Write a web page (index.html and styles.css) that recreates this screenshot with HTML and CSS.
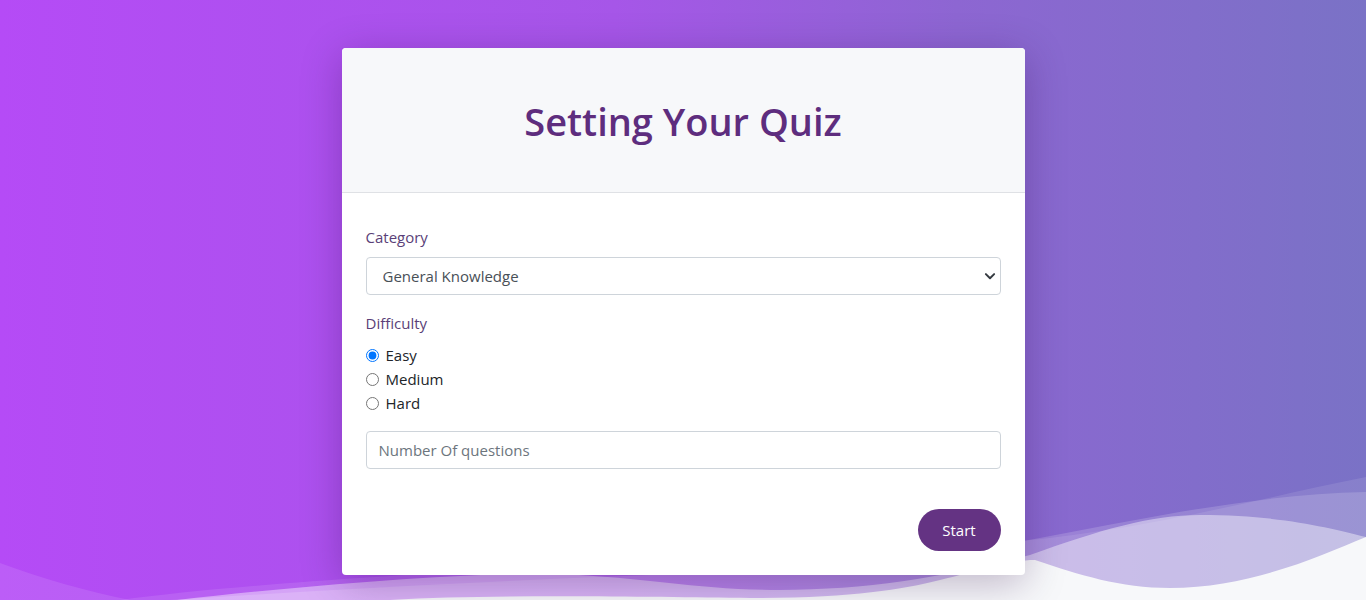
FILE: index.html
```html
<!DOCTYPE html>
<html lang="en">
<head>
<meta charset="utf-8">
<title>Setting Your Quiz</title>
<link rel="stylesheet" href="styles.css">
</head>
<body>
<svg class="waves" viewBox="0 0 1366 600" preserveAspectRatio="none" aria-hidden="true">
  <path class="w1" d="M0,563 C40,578 90,592 130,600 L0,600 Z"/>
  <path class="w2" d="M120,600 C300,575 700,560 1000,543 C1150,530 1250,500 1366,477 L1366,600 Z"/>
  <path class="w3" d="M170,600 C400,585 600,576 800,570 C1000,560 1180,496 1366,492 L1366,600 Z"/>
  <path class="w4" d="M177,600 C300,586 460,572 560,574 C650,578 700,590 780,590 C870,590 950,576 1030,555 C1100,530 1150,515 1200,515 C1280,515 1330,528 1366,537 L1366,600 Z"/>
  <path class="w5" d="M390,600 C500,594 650,597 750,598 C850,598 900,590 940,580 C990,568 1010,560 1035,560 C1080,575 1120,588 1170,588 C1250,588 1320,556 1366,537 L1366,600 Z"/>
</svg>
<main class="card">
  <header class="card-header">
    <h1 class="title">Setting Your Quiz</h1>
  </header>
  <form class="card-body">
    <div class="group">
      <label class="label" for="category">Category</label>
      <div class="select-wrap">
        <select id="category" class="control select">
          <option>General Knowledge</option>
        </select>
        <svg class="chevron" viewBox="0 0 16 16" aria-hidden="true"><path d="M2.5 5.5 L8 11 L13.5 5.5" fill="none" stroke="#343a40" stroke-width="2.6" stroke-linecap="round" stroke-linejoin="round"/></svg>
      </div>
    </div>
    <div class="group">
      <span class="label">Difficulty</span>
      <div class="radios">
        <label class="radio"><input type="radio" name="difficulty" checked><span>Easy</span></label>
        <label class="radio"><input type="radio" name="difficulty"><span>Medium</span></label>
        <label class="radio"><input type="radio" name="difficulty"><span>Hard</span></label>
      </div>
    </div>
    <div class="group">
      <input class="control input" type="text" placeholder="Number Of questions">
    </div>
    <div class="actions">
      <button type="button" class="btn">Start</button>
    </div>
  </form>
</main>
</body>
</html>
```
FILE: styles.css
```css
* { box-sizing: border-box; }
html, body { margin: 0; padding: 0; }
body {
  position: relative;
  height: 600px;
  overflow: hidden;
  font-family: "Open Sans", "Noto Sans", sans-serif;
  background: linear-gradient(90deg, #b54bf6 0%, #a656e8 45%, #8d66d2 70%, #7a72c6 100%);
  display: flex;
  flex-direction: column;
  align-items: center;
}
.waves {
  position: absolute;
  left: 0; top: 0;
  width: 1366px; height: 600px;
  z-index: 0;
}
.w1 { fill: rgba(255,255,255,0.10); }
.w2 { fill: rgba(255,255,255,0.10); }
.w3 { fill: rgba(255,255,255,0.16); }
.w4 { fill: rgba(255,255,255,0.42); }
.w5 { fill: #f7f8fa; }

.card {
  position: relative;
  z-index: 1;
  margin-top: 48px;
  width: 683px;
  background: #fff;
  border-radius: 4px;
  box-shadow: 0 8px 40px rgba(40, 0, 70, 0.28);
  overflow: hidden;
}
.card-header {
  background: #f7f8fa;
  border-bottom: 1px solid #dfe1e5;
  padding: 49px 0 47px;
  text-align: center;
}
.title {
  margin: 0;
  font-size: 38px;
  line-height: 48px;
  font-weight: 600;
  color: #5e2d7e;
}
.card-body {
  padding: 32px 24px 24px;
  display: flex;
  flex-direction: column;
}
.group { margin-bottom: 16px; display: flex; flex-direction: column; }
.label {
  display: block;
  font-size: 15px;
  line-height: 24px;
  color: #5a3f78;
  margin-bottom: 8px;
}
.control {
  display: block;
  width: 100%;
  height: 38px;
  border: 1px solid #ced4da;
  border-radius: 4px;
  background: #fff;
  font-family: inherit;
  font-size: 15px;
  color: #495057;
  outline: none;
}
.select-wrap { position: relative; }
.select {
  -webkit-appearance: none;
  appearance: none;
  padding: 0 32px 0 16px;
}
.chevron {
  position: absolute;
  right: 5px;
  top: 13px;
  width: 12px;
  height: 12px;
  pointer-events: none;
}
.radios { display: flex; flex-direction: column; }
.radio {
  display: flex;
  align-items: center;
  height: 24px;
  font-size: 15px;
  color: #212529;
}
.radio input {
  margin: 0 7px 0 0;
  width: 13px;
  height: 13px;
}
.input {
  padding: 0 12px;
}
.input::placeholder { color: #6c757d; }
.actions {
  display: flex;
  justify-content: flex-end;
  margin-top: 24px;
}
.btn {
  height: 42px;
  width: 83px;
  border: none;
  border-radius: 21px;
  background: #643383;
  color: #fff;
  font-family: inherit;
  font-size: 15px;
  cursor: pointer;
}
```
